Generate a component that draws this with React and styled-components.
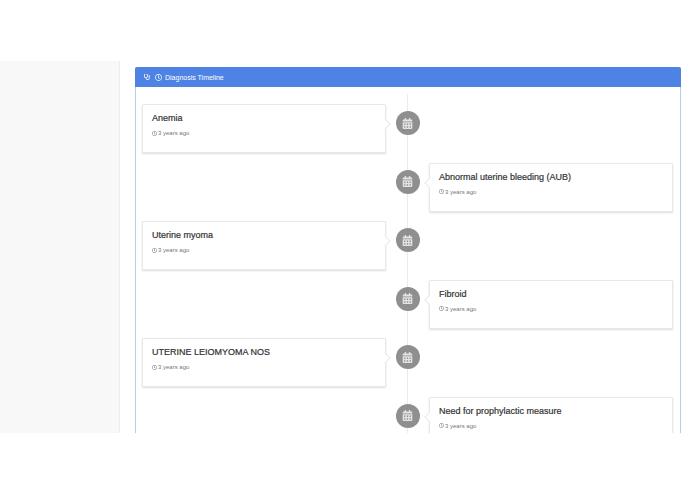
import React from "react";
import styled, { createGlobalStyle } from "styled-components";
import { FaCalendarAlt, FaStethoscope, FaRegClock } from "react-icons/fa";

const items = [
  { title: "Anemia", side: "left" },
  { title: "Abnormal uterine bleeding (AUB)", side: "right" },
  { title: "Uterine myoma", side: "left" },
  { title: "Fibroid", side: "right" },
  { title: "UTERINE LEIOMYOMA NOS", side: "left" },
  { title: "Need for prophylactic measure", side: "right" },
];

export default function App() {
  return (
    <>
      <GlobalStyle />
      <Page>
        <Main>
          <Sidebar />
          <Content>
            <Panel>
              <PanelHeader>
                <FaStethoscope size={6} />
                <FaRegClock size={7} />
                <span>Diagnosis Timeline</span>
              </PanelHeader>
              <Timeline>
                {items.map((item) => (
                  <Row key={item.title}>
                    <Card $side={item.side}>
                      <Title>{item.title}</Title>
                      <Time>
                        <FaRegClock size={5} />3 years ago
                      </Time>
                    </Card>
                    <Badge>
                      <FaCalendarAlt size={11} />
                    </Badge>
                  </Row>
                ))}
              </Timeline>
            </Panel>
          </Content>
        </Main>
      </Page>
    </>
  );
}

const GlobalStyle = createGlobalStyle`
  html, body {
    margin: 0;
    background: #fff;
  }
  * {
    box-sizing: border-box;
  }
`;

const Page = styled.div`
  height: 494px;
  padding-top: 61px;
  font-family: "Liberation Sans", Arial, sans-serif;
  overflow: hidden;
`;

const Main = styled.div`
  display: flex;
  height: 372px;
  overflow: hidden;
`;

const Sidebar = styled.aside`
  width: 120px;
  flex-shrink: 0;
  background: #f8f8f8;
  border-right: 1px solid #ededed;
`;

const Content = styled.main`
  flex: 1;
  padding: 6px 14px 0 15px;
`;

const Panel = styled.section`
  border: 1px solid #b9cdea;
  border-top: none;
  border-radius: 2px 2px 0 0;
  background: #fff;
`;

const PanelHeader = styled.header`
  display: flex;
  align-items: center;
  gap: 5px;
  height: 20px;
  margin: 0 -1px;
  padding-left: 9px;
  border-radius: 2px 2px 0 0;
  background: #4e82e4;
  color: #fff;
  font-size: 7px;
  span {
    margin-left: -2px;
  }
`;

const Timeline = styled.div`
  position: relative;
  padding: 17px 6px 0;
  &::before {
    content: "";
    position: absolute;
    top: 7px;
    bottom: 0;
    left: 271px;
    width: 1px;
    background: #ebebeb;
  }
`;

const Row = styled.div`
  display: grid;
  grid-template-columns: 244px 43px 244px;
  align-items: start;
  height: 58.5px;
`;

const Card = styled.article`
  position: relative;
  grid-column: ${(p) => (p.$side === "left" ? 1 : 3)};
  grid-row: 1;
  height: 49px;
  padding: 8px 9px;
  background: #fff;
  border: 1px solid #e8e8e8;
  border-radius: 1px;
  box-shadow: 0 1px 2px rgba(0, 0, 0, 0.14);
  &::after {
    content: "";
    position: absolute;
    top: 15px;
    ${(p) => (p.$side === "left" ? "right: -4px;" : "left: -4px;")}
    width: 7px;
    height: 7px;
    background: #fff;
    border: 1px solid #e8e8e8;
    ${(p) =>
      p.$side === "left"
        ? "border-left: none; border-bottom: none;"
        : "border-right: none; border-top: none;"}
    transform: rotate(45deg);
  }
`;

const Title = styled.h4`
  margin: 0;
  font-size: 9px;
  font-weight: 400;
  line-height: 10px;
  color: #333;
  -webkit-text-stroke: 0.2px #333;
`;

const Time = styled.p`
  display: flex;
  align-items: center;
  gap: 1px;
  margin: 6px 0 0;
  font-size: 6px;
  line-height: 8px;
  color: #777;
`;

const Badge = styled.div`
  grid-column: 2;
  grid-row: 1;
  justify-self: center;
  position: relative;
  display: flex;
  align-items: center;
  justify-content: center;
  width: 24px;
  height: 24px;
  margin-top: 7px;
  border-radius: 50%;
  background: #8f8f8f;
  color: #e4e4e4;
`;
